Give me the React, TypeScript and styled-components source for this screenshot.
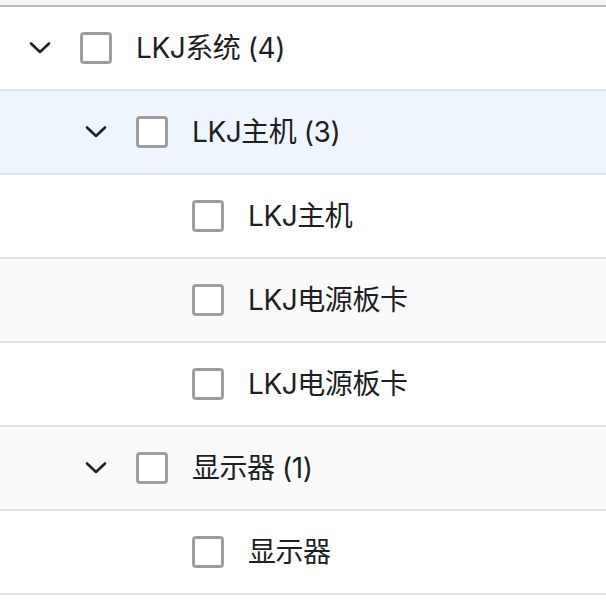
import React from "react";
import styled, { createGlobalStyle } from "styled-components";

const Global = createGlobalStyle`
  html, body { margin: 0; padding: 0; background: #ffffff; }
  body { font-family: "Inter", "Noto Sans CJK SC", sans-serif; }
`;

type Node = { label: string; count?: number; level: number; expandable?: boolean; bg: "white" | "stripe" | "active" };

const rows: Node[] = [
  { label: "LKJ系统", count: 4, level: 0, expandable: true, bg: "white" },
  { label: "LKJ主机", count: 3, level: 1, expandable: true, bg: "active" },
  { label: "LKJ主机", level: 2, bg: "white" },
  { label: "LKJ电源板卡", level: 2, bg: "stripe" },
  { label: "LKJ电源板卡", level: 2, bg: "white" },
  { label: "显示器", count: 1, level: 1, expandable: true, bg: "stripe" },
  { label: "显示器", level: 2, bg: "white" },
];

const bgMap = { white: "#ffffff", stripe: "#fafafa", active: "#eef5fd" };

const Header = styled.div`
  height: 5px;
  background: #f7f7f7;
  border-bottom: 2px solid #b9bcc8;
`;

const List = styled.div`
  display: flex;
  flex-direction: column;
`;

const Row = styled.div<{ $level: number; $bg: keyof typeof bgMap }>`
  display: flex;
  align-items: center;
  height: 82px;
  padding-left: ${(p) => 16 + p.$level * 56}px;
  background: ${(p) => bgMap[p.$bg]};
  border-bottom: 2px solid #e1e4ed;
  box-sizing: content-box;
`;

const Toggle = styled.div`
  width: 48px;
  height: 48px;
  display: flex;
  align-items: center;
  justify-content: center;
  margin-right: 16px;
  color: #1f2329;
`;

const Box = styled.span`
  width: 32px;
  height: 32px;
  box-sizing: border-box;
  border: 3px solid #9e9e9e;
  border-radius: 4px;
  background: #ffffff;
  margin-right: 24px;
  flex-shrink: 0;
`;

const Label = styled.span`
  font-size: 28px;
  color: #1c1f23;
  line-height: 1;
  letter-spacing: -0.45px;
  white-space: nowrap;
`;

const Chevron = () => (
  <svg width="22" height="14" viewBox="0 0 22 14" fill="none">
    <path d="M2 2.5 L11 11 L20 2.5" stroke="currentColor" strokeWidth="2.6" strokeLinecap="round" strokeLinejoin="round" />
  </svg>
);

export default function App() {
  return (
    <>
      <Global />
      <Header />
      <List>
        {rows.map((r, i) => (
          <Row key={i} $level={r.level} $bg={r.bg}>
            <Toggle>{r.expandable ? <Chevron /> : null}</Toggle>
            <Box />
            <Label>
              {r.label}
              {r.count !== undefined ? ` (${r.count})` : ""}
            </Label>
          </Row>
        ))}
      </List>
    </>
  );
}
